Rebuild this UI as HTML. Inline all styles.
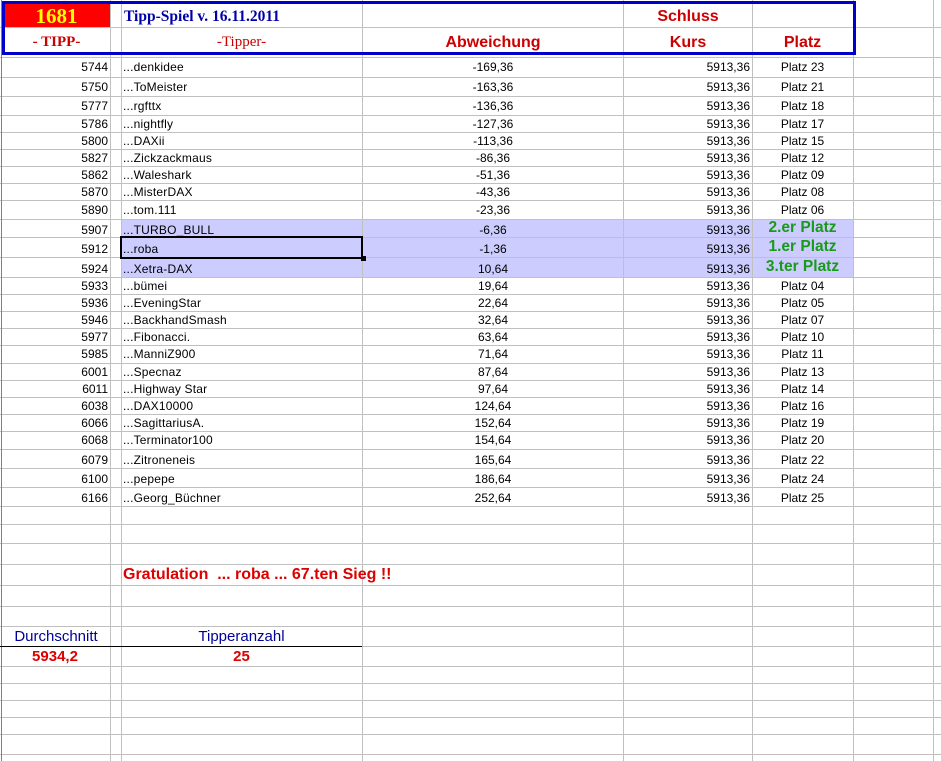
<!DOCTYPE html>
<html><head><meta charset="utf-8"><style>
body{margin:0;width:941px;height:761px;background:#fff;position:relative;overflow:hidden;font-family:"Liberation Sans",Arial,sans-serif;font-size:12px;color:#000}
.h{position:absolute;left:0;width:941px;height:1px;background:#c0c0c0}
.v{position:absolute;top:0;height:761px;width:1px;background:#c0c0c0}
.r{position:absolute;left:0;width:941px}
.r div{position:absolute;top:0;height:100%;display:flex;align-items:center;white-space:nowrap}
.a{left:0;width:108px;justify-content:flex-end}
.b{left:123px;letter-spacing:0.2px}
.c{left:362px;width:262px;justify-content:center}
.d{left:624px;width:126px;justify-content:flex-end}
.e{left:752px;width:101px;justify-content:center}
.g{color:#1a9a1a;font-weight:bold;font-size:15.5px}
</style></head><body>
<div style="position:absolute;left:121px;top:219px;width:732px;height:58px;background:#ccccff"></div>
<div class="h" style="top:27px"></div>
<div class="h" style="top:57px"></div><div class="h" style="top:77px"></div><div class="h" style="top:96px"></div><div class="h" style="top:115px"></div><div class="h" style="top:132px"></div><div class="h" style="top:149px"></div><div class="h" style="top:166px"></div><div class="h" style="top:183px"></div><div class="h" style="top:200px"></div><div class="h" style="top:219px"></div><div class="h" style="top:237px"></div><div class="h" style="top:257px"></div><div class="h" style="top:277px"></div><div class="h" style="top:294px"></div><div class="h" style="top:311px"></div><div class="h" style="top:328px"></div><div class="h" style="top:345px"></div><div class="h" style="top:363px"></div><div class="h" style="top:380px"></div><div class="h" style="top:397px"></div><div class="h" style="top:414px"></div><div class="h" style="top:431px"></div><div class="h" style="top:449px"></div><div class="h" style="top:468px"></div><div class="h" style="top:487px"></div><div class="h" style="top:506px"></div><div class="h" style="top:524px"></div><div class="h" style="top:543px"></div><div class="h" style="top:564px"></div><div class="h" style="top:585px"></div><div class="h" style="top:606px"></div><div class="h" style="top:626px"></div><div class="h" style="top:646px"></div><div class="h" style="top:666px"></div><div class="h" style="top:683px"></div><div class="h" style="top:700px"></div><div class="h" style="top:717px"></div><div class="h" style="top:734px"></div><div class="h" style="top:754px"></div>
<div class="v" style="left:1px;background:#808080"></div>
<div class="v" style="left:110px"></div><div class="v" style="left:121px"></div><div class="v" style="left:362px"></div><div class="v" style="left:623px"></div><div class="v" style="left:752px"></div><div class="v" style="left:853px"></div><div class="v" style="left:933px"></div>
<div style="position:absolute;left:0;top:646px;width:362px;height:1px;background:#000"></div>
<div style="position:absolute;left:3px;top:3px;width:107px;height:24px;background:#ff0000;color:#ffff00;font-family:'Liberation Serif',serif;font-weight:bold;font-size:21px;text-align:center;line-height:26px">1681</div>
<div style="position:absolute;left:2px;top:1px;width:848px;height:48px;border:3px solid #0000cc"></div>
<div style="position:absolute;left:124px;top:8px;color:#0000aa;font-family:'Liberation Serif',serif;font-weight:bold;font-size:15.5px">Tipp-Spiel v. 16.11.2011</div>
<div style="position:absolute;left:3px;top:34px;width:107px;text-align:center;color:#cc0000;font-family:'Liberation Serif',serif;font-weight:bold;font-size:15px">- TIPP-</div>
<div style="position:absolute;left:121px;top:34px;width:241px;text-align:center;color:#cc0000;font-family:'Liberation Serif',serif;font-size:15px">-Tipper-</div>
<div style="position:absolute;left:362px;top:34px;width:262px;text-align:center;color:#cc0000;font-weight:bold;font-size:16px">Abweichung</div>
<div style="position:absolute;left:624px;top:8px;width:128px;text-align:center;color:#cc0000;font-weight:bold;font-size:16px">Schluss</div>
<div style="position:absolute;left:624px;top:34px;width:128px;text-align:center;color:#cc0000;font-weight:bold;font-size:16px">Kurs</div>
<div style="position:absolute;left:752px;top:34px;width:101px;text-align:center;color:#cc0000;font-weight:bold;font-size:16px">Platz</div>

<div class="r" style="top:57px;height:20px"><div class="a">5744</div><div class="b">...denkidee</div><div class="c">-169,36</div><div class="d">5913,36</div><div class="e">Platz 23</div></div>
<div class="r" style="top:77px;height:19px"><div class="a">5750</div><div class="b">...ToMeister</div><div class="c">-163,36</div><div class="d">5913,36</div><div class="e">Platz 21</div></div>
<div class="r" style="top:96px;height:19px"><div class="a">5777</div><div class="b">...rgfttx</div><div class="c">-136,36</div><div class="d">5913,36</div><div class="e">Platz 18</div></div>
<div class="r" style="top:115px;height:17px"><div class="a">5786</div><div class="b">...nightfly</div><div class="c">-127,36</div><div class="d">5913,36</div><div class="e">Platz 17</div></div>
<div class="r" style="top:132px;height:17px"><div class="a">5800</div><div class="b">...DAXii</div><div class="c">-113,36</div><div class="d">5913,36</div><div class="e">Platz 15</div></div>
<div class="r" style="top:149px;height:17px"><div class="a">5827</div><div class="b">...Zickzackmaus</div><div class="c">-86,36</div><div class="d">5913,36</div><div class="e">Platz 12</div></div>
<div class="r" style="top:166px;height:17px"><div class="a">5862</div><div class="b">...Waleshark</div><div class="c">-51,36</div><div class="d">5913,36</div><div class="e">Platz 09</div></div>
<div class="r" style="top:183px;height:17px"><div class="a">5870</div><div class="b">...MisterDAX</div><div class="c">-43,36</div><div class="d">5913,36</div><div class="e">Platz 08</div></div>
<div class="r" style="top:200px;height:19px"><div class="a">5890</div><div class="b">...tom.111</div><div class="c">-23,36</div><div class="d">5913,36</div><div class="e">Platz 06</div></div>
<div class="r" style="top:220px;height:19px"><div class="a">5907</div><div class="b">...TURBO_BULL</div><div class="c">-6,36</div><div class="d">5913,36</div><div class="e g" style="top:-2px">2.er Platz</div></div>
<div class="r" style="top:239px;height:19px"><div class="a">5912</div><div class="b">...roba</div><div class="c">-1,36</div><div class="d">5913,36</div><div class="e g" style="top:-2px">1.er Platz</div></div>
<div class="r" style="top:259px;height:20px"><div class="a">5924</div><div class="b">...Xetra-DAX</div><div class="c">10,64</div><div class="d">5913,36</div><div class="e g" style="top:-2px">3.ter Platz</div></div>
<div style="position:absolute;left:120px;top:236px;width:239px;height:19px;border:2px solid #000"></div>
<div style="position:absolute;left:361px;top:256px;width:5px;height:5px;background:#000"></div>
<div class="r" style="top:277px;height:17px"><div class="a">5933</div><div class="b">...bümei</div><div class="c">19,64</div><div class="d">5913,36</div><div class="e">Platz 04</div></div>
<div class="r" style="top:294px;height:17px"><div class="a">5936</div><div class="b">...EveningStar</div><div class="c">22,64</div><div class="d">5913,36</div><div class="e">Platz 05</div></div>
<div class="r" style="top:311px;height:17px"><div class="a">5946</div><div class="b">...BackhandSmash</div><div class="c">32,64</div><div class="d">5913,36</div><div class="e">Platz 07</div></div>
<div class="r" style="top:328px;height:17px"><div class="a">5977</div><div class="b">...Fibonacci.</div><div class="c">63,64</div><div class="d">5913,36</div><div class="e">Platz 10</div></div>
<div class="r" style="top:345px;height:18px"><div class="a">5985</div><div class="b">...ManniZ900</div><div class="c">71,64</div><div class="d">5913,36</div><div class="e">Platz 11</div></div>
<div class="r" style="top:363px;height:17px"><div class="a">6001</div><div class="b">...Specnaz</div><div class="c">87,64</div><div class="d">5913,36</div><div class="e">Platz 13</div></div>
<div class="r" style="top:380px;height:17px"><div class="a">6011</div><div class="b">...Highway Star</div><div class="c">97,64</div><div class="d">5913,36</div><div class="e">Platz 14</div></div>
<div class="r" style="top:397px;height:17px"><div class="a">6038</div><div class="b">...DAX10000</div><div class="c">124,64</div><div class="d">5913,36</div><div class="e">Platz 16</div></div>
<div class="r" style="top:414px;height:17px"><div class="a">6066</div><div class="b">...SagittariusA.</div><div class="c">152,64</div><div class="d">5913,36</div><div class="e">Platz 19</div></div>
<div class="r" style="top:431px;height:18px"><div class="a">6068</div><div class="b">...Terminator100</div><div class="c">154,64</div><div class="d">5913,36</div><div class="e">Platz 20</div></div>
<div class="r" style="top:450px;height:19px"><div class="a">6079</div><div class="b">...Zitroneneis</div><div class="c">165,64</div><div class="d">5913,36</div><div class="e">Platz 22</div></div>
<div class="r" style="top:469px;height:19px"><div class="a">6100</div><div class="b">...pepepe</div><div class="c">186,64</div><div class="d">5913,36</div><div class="e">Platz 24</div></div>
<div class="r" style="top:488px;height:19px"><div class="a">6166</div><div class="b">...Georg_Büchner</div><div class="c">252,64</div><div class="d">5913,36</div><div class="e">Platz 25</div></div>

<div style="position:absolute;left:123px;top:566px;color:#dd0000;font-weight:bold;font-size:16px;white-space:pre">Gratulation  ... roba ... 67.ten Sieg !!</div>
<div style="position:absolute;left:0;top:628px;width:112px;text-align:center;color:#00009a;font-size:15px">Durchschnitt</div>
<div style="position:absolute;left:121px;top:628px;width:241px;text-align:center;color:#00009a;font-size:15px">Tipperanzahl</div>
<div style="position:absolute;left:0;top:648px;width:110px;text-align:center;color:#dd0000;font-weight:bold;font-size:15px">5934,2</div>
<div style="position:absolute;left:121px;top:648px;width:241px;text-align:center;color:#dd0000;font-weight:bold;font-size:15px">25</div>
</body></html>
